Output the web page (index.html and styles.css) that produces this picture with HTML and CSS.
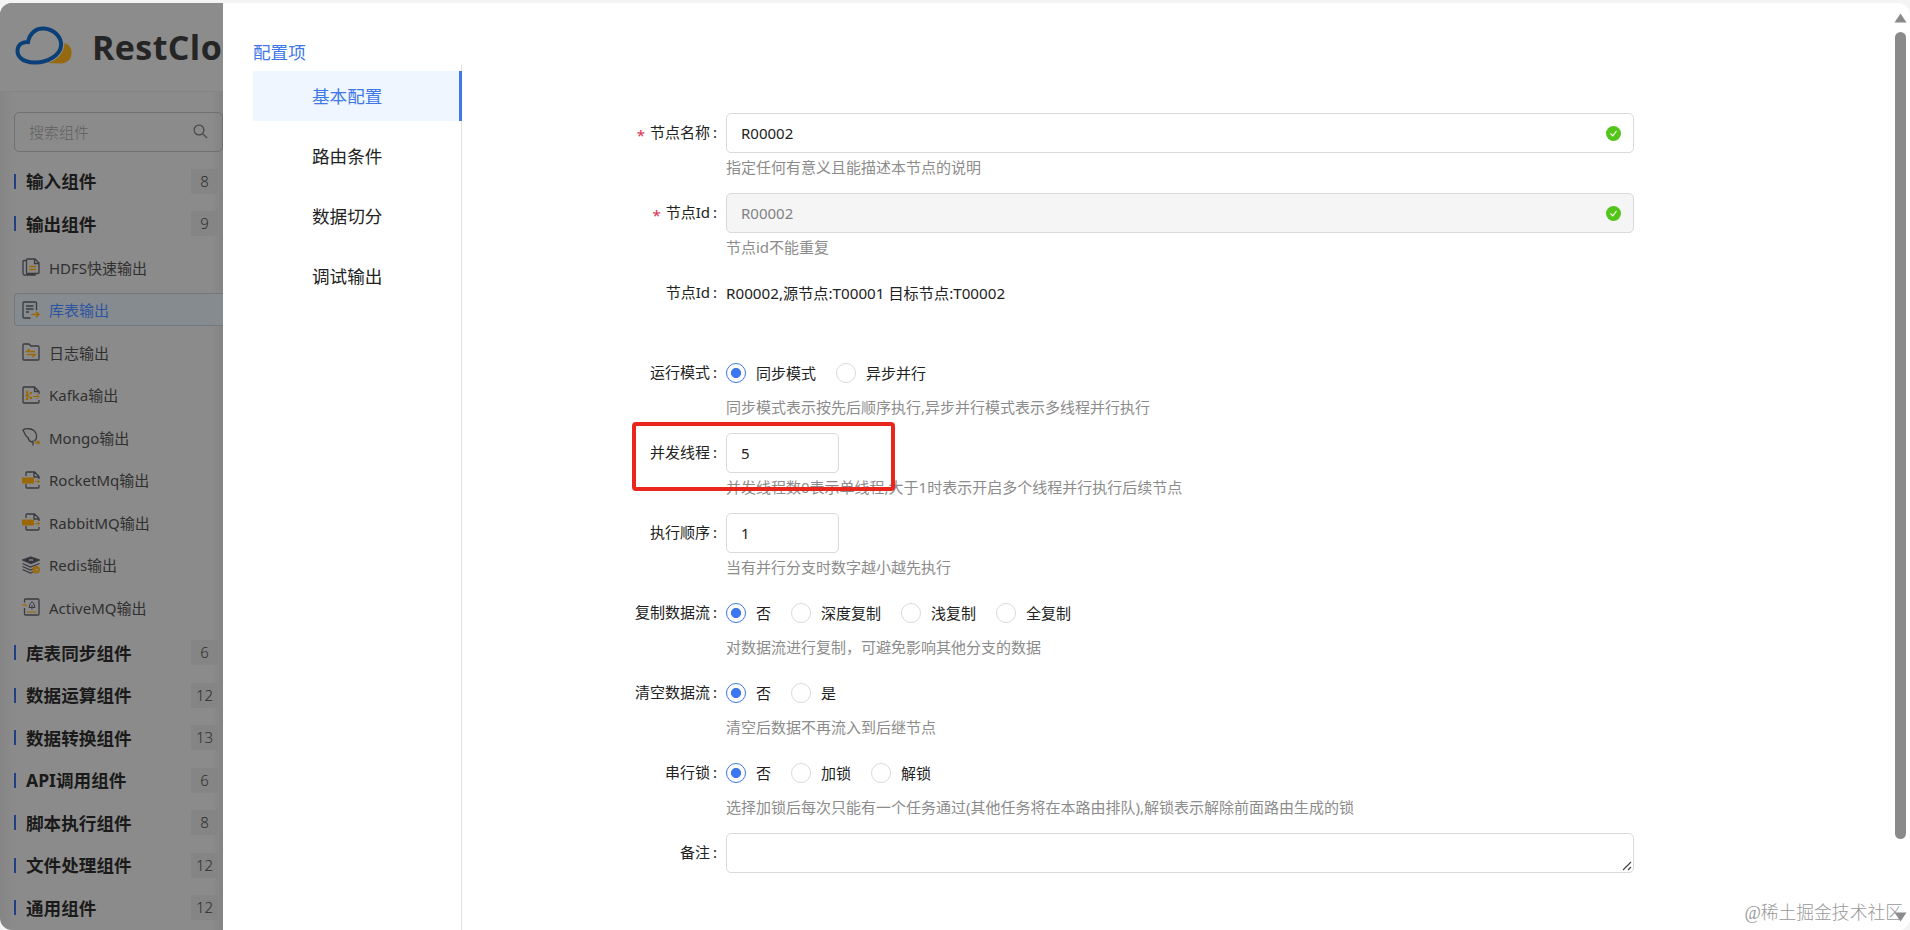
FILE: index.html
```html
<!DOCTYPE html>
<html lang="zh-CN">
<head>
  <meta charset="UTF-8">
  <meta name="viewport" content="width=device-width, initial-scale=1.0">
  <title>RestCloud</title>
  <link rel="stylesheet" href="styles.css">
</head>
<body>
  <div class="app">
    <aside class="sidebar">
      <div class="brand">
        <svg class="logo" width="58" height="40" viewBox="0 0 58 40">
          <path d="M33 37 C42 34 49 28 49.5 17 C55 19 57 23 56.5 28 C56 34 51 37.500 46 37.500 Z" fill="#95690f"/>
          <path d="M13 16 C15 6 22 2 29 2.500 C40 3.500 47 12 46 20 C45 29 33 37 19 36.500 C8 36 2.500 31 2.500 25 C2.500 19 7 15.500 13 16 Z" fill="none" stroke="#0a4077" stroke-width="4"/>
        </svg>
        <span class="brand-name">RestCloud</span>
      </div>
      <div class="search">
        <span>搜索组件</span>
        <svg width="15" height="15" viewBox="0 0 15 15" fill="none" stroke="#484848" stroke-width="1.200"><circle cx="6" cy="6" r="4.900"/><path d="M9.600 9.600 L14 14"/></svg>
      </div>

      <div class="group"><b>输入组件</b><span class="count">8</span></div>
      <div class="group"><b>输出组件</b><span class="count">9</span></div>

      <ul class="items">
        <li>
          <svg class="icon" viewBox="0 0 18 18"><path d="M5.500 1 H13 L17 5 V14.500 Q17 15.500 16 15.500 H5.500 Q4.500 15.500 4.500 14.500 V2 Q4.500 1 5.500 1 Z M4 2.500 H2 Q1 2.500 1 3.500 V15.500 Q1 17 2.500 17 H13 V16 M12.500 1 V5.500 H17"/><path class="hot" d="M7.500 8.500 H14 M7.500 11.500 H14"/></svg>
          HDFS快速输出
        </li>
        <li class="selected">
          <svg class="icon" viewBox="0 0 18 18"><path d="M14.500 9 V2 Q14.500 1 13.500 1 H2 Q1 1 1 2 V16 Q1 17 2 17 H8.500 M4 5 H11.500 M4 8 H11.500 M4 11 H7"/><path class="hot" d="M9.500 13.500 H17 M14 10.800 L17 13.500 L14 16.200"/></svg>
          库表输出
        </li>
        <li>
          <svg class="icon" viewBox="0 0 18 18"><path d="M1 2 Q1 1 2 1 H7 L9 3 H16 Q17 3 17 4 V16 Q17 17 16 17 H2 Q1 17 1 16 Z"/><path class="hot" d="M13 8.500 H5 L7.500 6 M5 11.500 H13 L10.500 14"/></svg>
          日志输出
        </li>
        <li>
          <svg class="icon" viewBox="0 0 18 18"><path d="M17 8 V5.500 L12.500 1 H2 Q1 1 1 2 V16 Q1 17 2 17 H16 Q17 17 17 16 V14 M12.500 1 V5.500 H17"/><path class="hot thin" d="M5 6 V13 M5 9.500 L9 7 M5 9.500 L9 12 M11 10.500 H17 M14.500 8 L17 10.500 L14.500 13"/><g class="hot-fill"><circle cx="5" cy="6" r="1.300"/><circle cx="5" cy="13" r="1.300"/><circle cx="5" cy="9.500" r="1.400"/><circle cx="9" cy="7" r="1.200"/><circle cx="9" cy="12" r="1.200"/></g></svg>
          Kafka输出
        </li>
        <li>
          <svg class="icon" viewBox="0 0 18 18"><path d="M11 17.500 V12.500 M11 14 C8 14 6.500 12 6 9.500 C4 9 2.500 5 1 2 C4 0 9 .5 12 2.500 C14.500 5 15 8 14.200 11 L12.500 13"/><path class="hot" d="M13 14.500 H17.500 M15.500 12.700 L17.500 14.500 L15.500 16.300"/></svg>
          Mongo输出
        </li>
        <li>
          <svg class="icon" viewBox="0 0 18 18"><path d="M4 5 V2 Q4 1 5 1 H12.500 L17 5.500 V8 M12 1 V6 H17 M4 13 V16 Q4 17 5 17 H16 Q17 17 17 16 V14"/><path class="hot thin" d="M13 10.500 H17.500 M15.500 8.500 L17.500 10.500 L15.500 12.500"/><rect class="hot-fill" x="0" y="6.500" width="12" height="6"/></svg>
          RocketMq输出
        </li>
        <li>
          <svg class="icon" viewBox="0 0 18 18"><path d="M4 5 V2 Q4 1 5 1 H12.500 L17 5.500 V8 M12 1 V6 H17 M4 13 V16 Q4 17 5 17 H16 Q17 17 17 16 V14"/><path class="hot thin" d="M13 10.500 H17.500 M15.500 8.500 L17.500 10.500 L15.500 12.500"/><rect class="hot-fill" x="0" y="6.500" width="12" height="6"/></svg>
          RabbitMQ输出
        </li>
        <li>
          <svg class="icon" viewBox="0 0 18 18"><path fill="#30323b" d="M9 1 L17.500 4 L9 7.500 L.5 4 Z"/><path d="M.5 7.500 L8.500 11 L17.500 7.500 M.5 10.500 L8.500 14 L11 13 M.5 13.500 L8.500 17 L11 16"/><path stroke="#8b8b8b" stroke-width=".8" d="M7 3.200 L11 4.700 M11 3.200 L7 4.700"/><circle class="hot-fill" cx="14.200" cy="13.800" r="3.800"/><path class="cut" d="M12.500 13.800 H16 M14.500 12.300 L16 13.800 L14.500 15.300"/></svg>
          Redis输出
        </li>
        <li>
          <svg class="icon" viewBox="0 0 18 18"><path d="M2.500 4.500 V2 Q2.500 1 3.500 1 H16 Q17 1 17 2 V16 Q17 17 16 17 H3.500 Q2.500 17 2.500 16 V10"/><path class="thin" d="M10 3.500 L12 6 L13 9.500 H7 L8 6 Z M10 7 V11.500"/><path class="hot thin" d="M0 7 H4.500 M3 5.500 L4.500 7 L3 8.500 M5 14 H14.500"/></svg>
          ActiveMQ输出
        </li>
      </ul>

      <div class="group"><b>库表同步组件</b><span class="count">6</span></div>
      <div class="group"><b>数据运算组件</b><span class="count">12</span></div>
      <div class="group"><b>数据转换组件</b><span class="count">13</span></div>
      <div class="group"><b>API调用组件</b><span class="count">6</span></div>
      <div class="group"><b>脚本执行组件</b><span class="count">8</span></div>
      <div class="group"><b>文件处理组件</b><span class="count">12</span></div>
      <div class="group"><b>通用组件</b><span class="count">12</span></div>
    </aside>

    <main class="drawer">
      <nav class="tabs">
        <div class="tabs-title">配置项</div>
        <div class="tabs-list">
          <a class="tab active">基本配置</a>
          <a class="tab">路由条件</a>
          <a class="tab">数据切分</a>
          <a class="tab">调试输出</a>
        </div>
      </nav>

      <form class="form">
        <div class="row">
          <div class="label"><i>*</i>节点名称<em>:</em></div>
          <div class="field">
            <div class="input">R00002<svg class="ok" viewBox="0 0 15 15"><circle cx="7.500" cy="7.500" r="7.500"/><path d="M4.500 7.500 L6.800 9.800 L10.500 5"/></svg></div>
            <div class="help">指定任何有意义且能描述本节点的说明</div>
          </div>
        </div>
        <div class="row">
          <div class="label"><i>*</i>节点Id<em>:</em></div>
          <div class="field">
            <div class="input disabled">R00002<svg class="ok" viewBox="0 0 15 15"><circle cx="7.500" cy="7.500" r="7.500"/><path d="M4.500 7.500 L6.800 9.800 L10.500 5"/></svg></div>
            <div class="help">节点id不能重复</div>
          </div>
        </div>
        <div class="row">
          <div class="label">节点Id<em>:</em></div>
          <div class="field"><div class="control plain">R00002,源节点:T00001 目标节点:T00002</div></div>
        </div>
        <div class="row">
          <div class="label">运行模式<em>:</em></div>
          <div class="field">
            <div class="control">
              <span class="radio checked">同步模式</span>
              <span class="radio">异步并行</span>
            </div>
            <div class="help">同步模式表示按先后顺序执行,异步并行模式表示多线程并行执行</div>
          </div>
        </div>
        <div class="row marked">
          <div class="label">并发线程<em>:</em></div>
          <div class="field">
            <div class="input short">5</div>
            <div class="help">并发线程数0表示单线程,大于1时表示开启多个线程并行执行后续节点</div>
          </div>
        </div>
        <div class="row">
          <div class="label">执行顺序<em>:</em></div>
          <div class="field">
            <div class="input short">1</div>
            <div class="help">当有并行分支时数字越小越先执行</div>
          </div>
        </div>
        <div class="row">
          <div class="label">复制数据流<em>:</em></div>
          <div class="field">
            <div class="control">
              <span class="radio checked">否</span>
              <span class="radio">深度复制</span>
              <span class="radio">浅复制</span>
              <span class="radio">全复制</span>
            </div>
            <div class="help">对数据流进行复制，可避免影响其他分支的数据</div>
          </div>
        </div>
        <div class="row">
          <div class="label">清空数据流<em>:</em></div>
          <div class="field">
            <div class="control">
              <span class="radio checked">否</span>
              <span class="radio">是</span>
            </div>
            <div class="help">清空后数据不再流入到后继节点</div>
          </div>
        </div>
        <div class="row">
          <div class="label">串行锁<em>:</em></div>
          <div class="field">
            <div class="control">
              <span class="radio checked">否</span>
              <span class="radio">加锁</span>
              <span class="radio">解锁</span>
            </div>
            <div class="help">选择加锁后每次只能有一个任务通过(其他任务将在本路由排队),解锁表示解除前面路由生成的锁</div>
          </div>
        </div>
        <div class="row">
          <div class="label">备注<em>:</em></div>
          <div class="field">
            <div class="input area"><svg class="grip" viewBox="0 0 10 10"><path d="M1 9 L9 1 M6 9 L9 6"/></svg></div>
          </div>
        </div>
      </form>

      <div class="scrollbar">
        <svg width="13" height="10" viewBox="0 0 13 10"><path d="M6.500 .5 L12.500 9.500 H.5 Z"/></svg>
        <div class="thumb"></div>
        <svg class="down" width="13" height="10" viewBox="0 0 13 10"><path d="M.5 .5 H12.500 L6.500 9.500 Z"/></svg>
      </div>
    </main>
  </div>
  <div class="watermark">@稀土掘金技术社区</div>
</body>
</html>
```
FILE: styles.css
```css
*,
*::before,
*::after {
  box-sizing: border-box;
}

body {
  margin: 0;
  height: 930px;
  padding-top: 3px;
  overflow: hidden;
  background: #f4f4f4;
  font-family: "Noto Sans", "Noto Sans CJK SC", sans-serif;
  font-size: 15px;
  color: #222;
}

.app {
  display: flex;
  height: 927px;
  border-radius: 12px;
  overflow: hidden;
  background: #fff;
}

/* sidebar, dimmed behind the drawer */
.sidebar {
  width: 223px;
  flex: none;
  overflow: hidden;
  background: linear-gradient(90deg, #858585, #8b8b8b 14px, #8b8b8b 212px, #838383);
}

.brand {
  display: flex;
  align-items: center;
  height: 89px;
  padding-left: 15px;
  border-bottom: 1px solid #858585;
  background: #8c8c8c;
}

.logo {
  flex: none;
  margin-bottom: 3px;
}

.brand-name {
  margin: 0 0 1px 19px;
  font: 700 34px/40px "Open Sans", sans-serif;
  letter-spacing: 0.4px;
  color: #252525;
}

.search {
  display: flex;
  align-items: center;
  justify-content: space-between;
  height: 40px;
  margin: 20px 0 8px 14px;
  padding: 0 14px 1px;
  border: 1px solid #707070;
  border-radius: 5px;
  font-weight: 300;
  color: #5f5f5f;
}

.group {
  display: flex;
  align-items: center;
  height: 42.5px;
  padding: 0 5px 0 14px;
}

.group::before {
  content: "";
  width: 2px;
  height: 15px;
  margin-right: 10px;
  background: #213f83;
}

.group b {
  font-size: 17.6px;
  line-height: 26px;
  color: #1a1a1a;
}

.count {
  width: 27px;
  margin-left: auto;
  background: #858585;
  font-size: 15px;
  font-weight: 300;
  line-height: 25px;
  text-align: center;
  color: #2c2c2c;
}

.items {
  margin: 0;
  padding: 1px 0 3px 14px;
  list-style: none;
}

.items li {
  display: flex;
  align-items: center;
  gap: 9px;
  height: 33px;
  margin: 4.75px 0 9.5px;
  padding-left: 7px;
  border: 1px solid transparent;
  font-size: 15px;
  color: #303030;
}

.items li:last-child {
  margin-bottom: 4.75px;
}

.items .selected {
  border-color: #73787d;
  border-right: 0;
  border-radius: 4px 0 0 4px;
  background: #868b8f;
  color: #2c54a3;
}

.icon {
  width: 18px;
  height: 18px;
  flex: none;
  fill: none;
  stroke: #3a3b40;
  stroke-width: 1.3;
}

.icon .hot {
  stroke: #9b6807;
  stroke-width: 1.5;
}

.icon .thin {
  stroke-width: 1;
}

.icon .hot-fill {
  fill: #9b6807;
  stroke: none;
}

.icon .cut {
  stroke: #8b8b8b;
  stroke-width: 0.8;
}

/* drawer */
.drawer {
  display: flex;
  flex: 1;
}

.tabs {
  display: flex;
  flex-direction: column;
  width: 239px;
  padding: 36px 0 0 30px;
}

.tabs-title {
  font-size: 17.6px;
  line-height: 26px;
  color: #3f78ea;
}

.tabs-list {
  flex: 1;
  padding-top: 6px;
  border-right: 1px solid #e2e2e2;
}

.tab {
  display: block;
  height: 50px;
  margin: 0 -1px 10px 0;
  padding-left: 59px;
  font-size: 17.6px;
  line-height: 50px;
}

.tab.active {
  border-right: 3px solid #4078e8;
  background: #eff6ff;
  color: #4078e8;
}

.form {
  width: 1172px;
  padding-top: 110px;
}

.row {
  display: flex;
  position: relative;
  height: 80px;
}

.label {
  width: 264px;
  flex: none;
  padding-right: 9px;
  line-height: 38px;
  text-align: right;
}

.label i {
  margin-right: 5px;
  font-style: normal;
  line-height: 1;
  vertical-align: -3px;
  color: #d9304f;
}

.label em {
  margin-left: 3px;
  font-style: normal;
}

.field {
  flex: 1;
}

.control,
.input {
  display: flex;
  align-items: center;
  height: 40px;
}

.control.plain {
  padding-bottom: 2px;
  font-size: 15.2px;
}

.input {
  justify-content: space-between;
  padding: 0 12px 0 14px;
  border: 1px solid #d9d9d9;
  border-radius: 5px;
}

.input.disabled {
  background: #f5f5f5;
  color: #828282;
}

.input.short {
  width: 113px;
}

.input.area {
  position: relative;
}

.help {
  line-height: 28px;
  color: #8c8c8c;
}

.ok {
  width: 15px;
  height: 15px;
  fill: #52c41a;
}

.ok path {
  fill: none;
  stroke: #fff;
  stroke-width: 1.2;
}

.radio {
  display: flex;
  align-items: center;
  gap: 10px;
  margin-right: 20px;
  line-height: 20px;
}

.radio::before {
  content: "";
  width: 20px;
  height: 20px;
  border: 1px solid #d9d9d9;
  border-radius: 50%;
}

.radio.checked::before {
  border-color: #3f76e8;
  background: radial-gradient(circle, #3c76f0 4.7px, #fff 5.4px);
}

.grip {
  position: absolute;
  right: 1px;
  bottom: 1px;
  width: 10px;
  height: 10px;
  fill: none;
  stroke: #444;
  stroke-width: 1.2;
}

/* red frame around the thread count */
.marked::after {
  content: "";
  position: absolute;
  left: 170px;
  top: -11px;
  width: 263px;
  height: 69px;
  border: 4px solid #ea261c;
  border-radius: 4px;
}

.scrollbar {
  display: flex;
  flex-direction: column;
  align-items: center;
  width: 14px;
  margin-left: auto;
  margin-right: 3px;
  padding: 10px 0 8px;
  fill: #8a8a8a;
}

.thumb {
  width: 11px;
  height: 807px;
  margin-top: 9px;
  border-radius: 6px;
  background: #8a8a8a;
}

.scrollbar .down {
  margin-top: auto;
}

.watermark {
  position: absolute;
  right: 7px;
  bottom: 4px;
  font: 300 17.8px/26px "Liberation Serif", "Noto Sans CJK SC", serif;
  color: #999;
}
```
